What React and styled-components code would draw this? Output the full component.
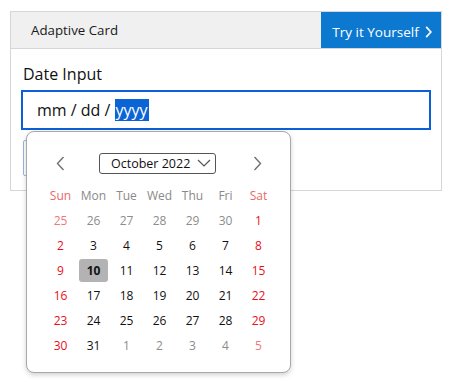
import React from 'react';
import styled, { createGlobalStyle } from 'styled-components';

const GlobalStyle = createGlobalStyle`
  html, body {
    margin: 0;
    background: #ffffff;
    font-family: "Open Sans", "Noto Sans", sans-serif;
  }
`;

const Page = styled.div`
  min-height: 392px;
  box-sizing: border-box;
  padding: 11px 7px 0 10px;
`;

const Card = styled.div`
  width: 430px;
  border: 1px solid #d6d6d6;
  background: #fff;
`;

const CardHeader = styled.div`
  display: flex;
  align-items: stretch;
  height: 36px;
  background: #f0f0f0;
  border-bottom: 1px solid #d6d6d6;
`;

const CardTitle = styled.div`
  flex: 1;
  display: flex;
  align-items: center;
  padding-left: 20px;
  font-size: 13.3px;
  color: #1a1a1a;
`;

const TryButton = styled.div`
  width: 118px;
  display: flex;
  align-items: center;
  justify-content: center;
  gap: 6px;
  background: #0c78d0;
  color: #fff;
  font-size: 13.5px;
  padding-top: 3px;
  padding-left: 2px;
`;

const CardBody = styled.div`
  padding: 14px 10px 14px 10px;
  position: relative;
`;

const Label = styled.div`
  font-size: 16px;
  color: #111;
  margin-left: 2px;
  margin-bottom: 5px;
`;

const DateField = styled.div`
  height: 36px;
  border: 2px solid #0b5fd8;
  display: flex;
  align-items: center;
  padding-left: 14px;
  font-size: 16px;
  color: #111;
`;

const Selected = styled.span`
  background: #0a64d6;
  color: #fff;
  padding: 0 1px;
`;

const GhostButton = styled.div`
  margin-top: 10px;
  margin-left: 2px;
  height: 34px;
  width: 120px;
  border: 1px solid #9bb3e3;
  border-radius: 2px;
`;

const Popup = styled.div`
  position: absolute;
  left: 15px;
  top: 82px;
  width: 265px;
  background: #fff;
  border: 1px solid #a8a8a8;
  border-radius: 8px;
  box-shadow: 0 2px 5px rgba(0, 0, 0, 0.18);
  padding: 20px 16px 14px 17px;
  box-sizing: border-box;
`;

const NavRow = styled.div`
  display: grid;
  grid-template-columns: 33px 1fr 33px;
  align-items: center;
  height: 22px;
  margin-bottom: 9px;
`;

const Arrow = styled.div`
  display: flex;
  justify-content: center;
  align-items: center;
`;

const MonthSelect = styled.div`
  justify-self: center;
  width: 117px;
  height: 21px;
  border: 1px solid #555;
  border-radius: 3px;
  display: flex;
  align-items: center;
  justify-content: space-between;
  padding: 0 4px 0 11px;
  box-sizing: border-box;
  font-size: 12.5px;
  white-space: nowrap;
  color: #111;
  margin-left: -3px;
`;

const Grid = styled.div`
  display: grid;
  grid-template-columns: repeat(7, 33px);
  grid-auto-rows: 25px;
`;

const HeadCell = styled.div`
  display: flex;
  align-items: center;
  justify-content: center;
  font-size: 12px;
  color: ${({ weekend }) => (weekend ? '#e8696b' : '#8a8a8a')};
`;

const DayCell = styled.div`
  display: flex;
  align-items: center;
  justify-content: center;
  font-size: 12px;
  color: ${({ muted, weekend }) =>
    muted ? (weekend ? '#ea7a7c' : '#8c8c8c') : weekend ? '#e8101a' : '#111'};
`;

const SelectedDay = styled.span`
  display: flex;
  align-items: center;
  justify-content: center;
  width: 29px;
  height: 23px;
  border-radius: 3px;
  background: #b3b3b3;
  font-weight: 700;
  color: #111;
`;

const Chevron = ({ dir, color = '#707070', w = 9, h = 15, sw = 1.4 }) => (
  <svg width={w} height={h} viewBox="0 0 9 15" fill="none">
    <path
      d={dir === 'left' ? 'M7.5 1 L1.5 7.5 L7.5 14' : 'M1.5 1 L7.5 7.5 L1.5 14'}
      stroke={color}
      strokeWidth={sw}
    />
  </svg>
);

const heads = ['Sun', 'Mon', 'Tue', 'Wed', 'Thu', 'Fri', 'Sat'];

const buildDays = () => {
  const days = [];
  [25, 26, 27, 28, 29, 30].forEach((d) => days.push({ d, muted: true }));
  for (let d = 1; d <= 31; d++) days.push({ d, muted: false });
  [1, 2, 3, 4, 5].forEach((d) => days.push({ d, muted: true }));
  return days;
};

const App = () => {
  const days = buildDays();
  return (
    <Page>
      <GlobalStyle />
      <Card>
        <CardHeader>
          <CardTitle>Adaptive Card</CardTitle>
          <TryButton>
            Try it Yourself
            <Chevron dir="right" color="#fff" w={7} h={12} sw={2.2} />
          </TryButton>
        </CardHeader>
        <CardBody>
          <Label>Date Input</Label>
          <DateField>
            mm / dd /&nbsp;<Selected>yyyy</Selected>
          </DateField>
          <GhostButton />
          <Popup>
            <NavRow>
              <Arrow><Chevron dir="left" /></Arrow>
              <MonthSelect>
                October 2022
                <svg width="14" height="8" viewBox="0 0 14 8" fill="none">
                  <path d="M1 1 L7 7 L13 1" stroke="#555" strokeWidth="1.2" />
                </svg>
              </MonthSelect>
              <Arrow><Chevron dir="right" /></Arrow>
            </NavRow>
            <Grid>
              {heads.map((h, i) => (
                <HeadCell key={h} weekend={i === 0 || i === 6}>{h}</HeadCell>
              ))}
              {days.map((day, i) => {
                const col = i % 7;
                const weekend = col === 0 || col === 6;
                return (
                  <DayCell key={i} muted={day.muted} weekend={weekend}>
                    {!day.muted && day.d === 10 ? <SelectedDay>10</SelectedDay> : day.d}
                  </DayCell>
                );
              })}
            </Grid>
          </Popup>
        </CardBody>
      </Card>
    </Page>
  );
};

export default App;
